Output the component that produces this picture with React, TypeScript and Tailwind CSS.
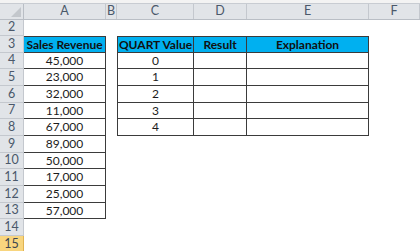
const COLS = [
  { key: "A", w: "w-[82px]" },
  { key: "B", w: "w-[11px]" },
  { key: "C", w: "w-[77px]" },
  { key: "D", w: "w-[53px]" },
  { key: "E", w: "w-[122px]" },
  { key: "F", w: "flex-1" },
];

// row number -> height class (rows are ~16.67px, snapped to whole pixels)
const ROWS: { n: number; h: string }[] = [
  { n: 2, h: "h-[16px]" },
  { n: 3, h: "h-[17px]" },
  { n: 4, h: "h-[16px]" },
  { n: 5, h: "h-[17px]" },
  { n: 6, h: "h-[17px]" },
  { n: 7, h: "h-[16px]" },
  { n: 8, h: "h-[17px]" },
  { n: 9, h: "h-[17px]" },
  { n: 10, h: "h-[16px]" },
  { n: 11, h: "h-[17px]" },
  { n: 12, h: "h-[17px]" },
  { n: 13, h: "h-[16px]" },
  { n: 14, h: "h-[17px]" },
  { n: 15, h: "h-[17px]" },
];

const REVENUE: Record<number, string> = {
  4: "45,000",
  5: "23,000",
  6: "32,000",
  7: "11,000",
  8: "67,000",
  9: "89,000",
  10: "50,000",
  11: "17,000",
  12: "25,000",
  13: "57,000",
};

const QUART: Record<number, string> = { 4: "0", 5: "1", 6: "2", 7: "3", 8: "4" };

function Cell({
  w,
  children,
  head,
  box,
  top,
  left,
}: {
  w: string;
  children?: React.ReactNode;
  head?: boolean;
  box?: boolean;
  top?: boolean;
  left?: boolean;
}) {
  return (
    <div
      className={[
        w,
        "flex items-center justify-center h-full leading-none",
        box ? "border-r border-b border-[#3b3b3b]" : "",
        box && top ? "border-t" : "",
        box && left ? "border-l" : "",
        head ? "bg-[#00b0f0] font-bold text-[#111]" : "text-[#1c1c1c]",
      ].join(" ")}
    >
      {children}
    </div>
  );
}

export default function App() {
  return (
    <div className="w-[420px] h-[251px] overflow-hidden bg-white font-['Lato','Noto_Sans',sans-serif] text-[12px]">
      <div className="h-[4px] bg-[#f3f3f3] border-b border-[#c8ccd2]" />

      {/* column letters */}
      <div className="flex h-[16px] bg-[#e1e4e8] border-b border-[#b9bec5] text-[#4a586a] text-[12.5px]">
        <div className="relative w-[24px] border-r border-[#b9bec5]">
          <svg className="absolute right-[2px] bottom-[2px]" width="10" height="10" viewBox="0 0 10 10">
            <path d="M10 0 L10 10 L0 10 Z" fill="#c3c7cc" />
          </svg>
        </div>
        {COLS.map((c) => (
          <div
            key={c.key}
            className={`${c.w} flex items-center justify-center border-r border-[#c4c8ce]`}
          >
            {c.key}
          </div>
        ))}
      </div>

      {ROWS.map((r) => {
        const active = r.n === 15;
        const inA = r.n >= 3 && r.n <= 13;
        const inCDE = r.n >= 3 && r.n <= 8;
        const hdr = r.n === 3;
        return (
          <div key={r.n} className={`flex ${r.h}`}>
            <div
              className={`w-[24px] flex items-center justify-center border-r border-b text-[12.5px] ${
                active
                  ? "bg-[#f8d57e] border-[#e0b352] text-[#3d4550]"
                  : "bg-[#e1e4e8] border-[#c4c8ce] text-[#4a586a]"
              }`}
            >
              {r.n}
            </div>
            <Cell w="w-[82px]" box={inA} top={hdr} head={hdr}>
              {hdr ? "Sales Revenue" : REVENUE[r.n]}
            </Cell>
            <Cell w="w-[11px]" />
            <Cell w="w-[77px]" box={inCDE} top={hdr} left head={hdr}>
              {hdr ? "QUART Value" : QUART[r.n]}
            </Cell>
            <Cell w="w-[53px]" box={inCDE} top={hdr} head={hdr}>
              {hdr ? "Result" : null}
            </Cell>
            <Cell w="w-[122px]" box={inCDE} top={hdr} head={hdr}>
              {hdr ? "Explanation" : null}
            </Cell>
            <div className="flex-1" />
          </div>
        );
      })}
    </div>
  );
}
